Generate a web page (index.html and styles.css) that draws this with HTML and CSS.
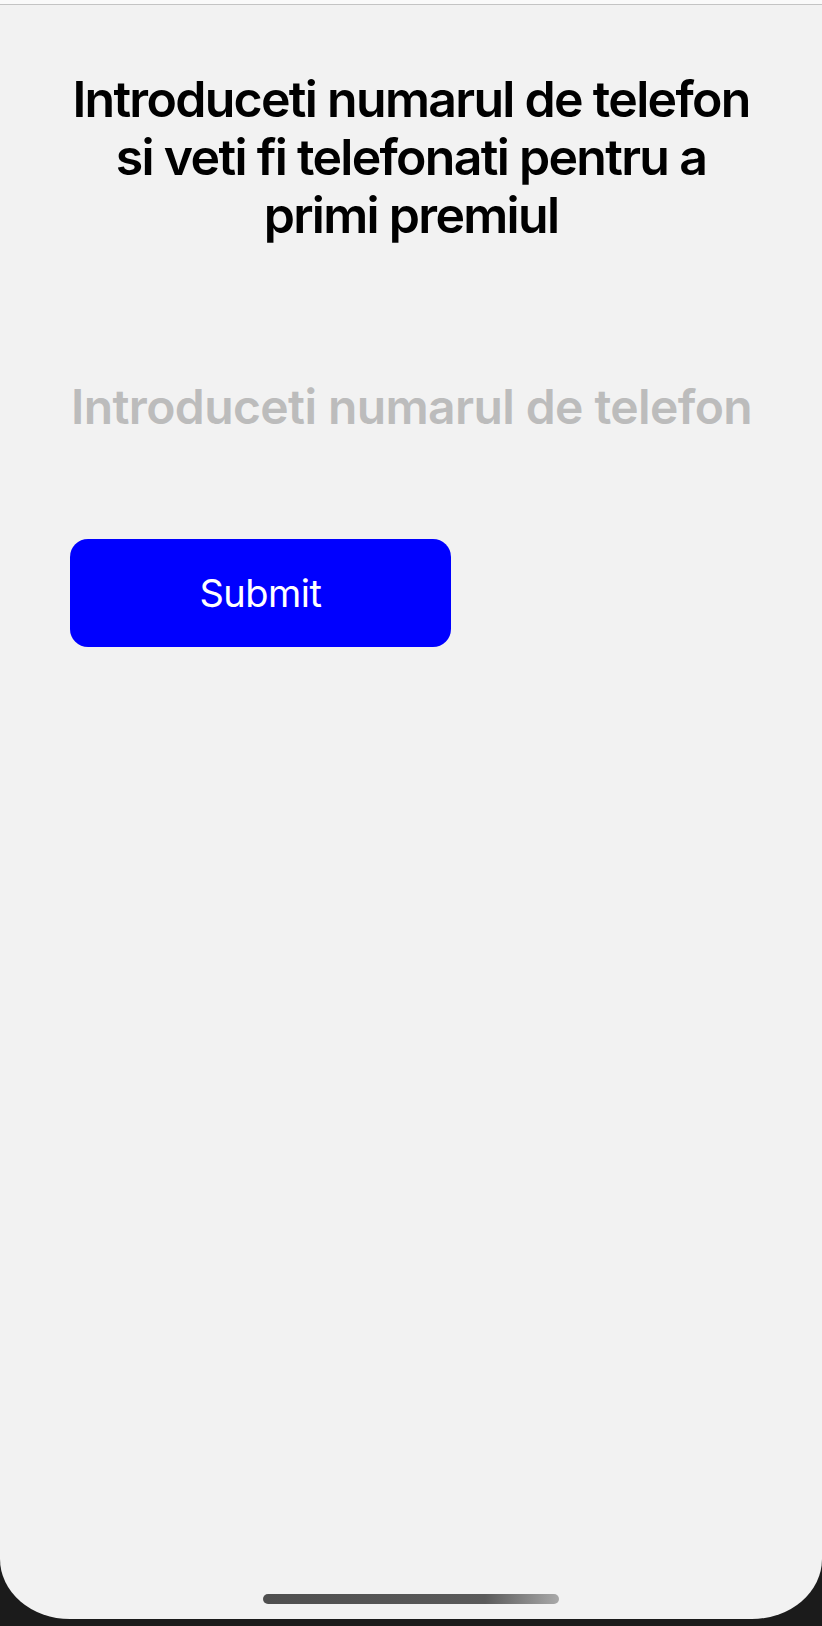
FILE: index.html
```html
<!DOCTYPE html>
<html lang="ro">
<head>
<meta charset="utf-8">
<title>Premiu</title>
<link rel="stylesheet" href="styles.css">
</head>
<body>
<div class="screen">
  <div class="topbar"></div>
  <main class="content">
    <h1 class="title">Introduceti numarul de telefon<br>si veti fi telefonati pentru a<br>primi premiul</h1>
    <input class="phone" type="tel" placeholder="Introduceti numarul de telefon">
    <button class="submit" type="button">Submit</button>
  </main>
  <div class="home-indicator"></div>
</div>
</body>
</html>
```
FILE: styles.css
```css
html, body {
  margin: 0;
  padding: 0;
}
body {
  background: #1b1b1b;
  width: 822px;
  height: 1626px;
  overflow: hidden;
  font-family: Inter, "Noto Sans", sans-serif;
}
.screen {
  height: 1619px;
  background: #f2f2f2;
  border-radius: 0 0 70px 70px / 0 0 60px 60px;
  display: flex;
  flex-direction: column;
}
.topbar {
  height: 4px;
  background: #fafafa;
  border-bottom: 1px solid #c4c4c4;
}
.content {
  flex: 1;
  display: flex;
  flex-direction: column;
  padding: 65px 70px 0;
}
.title {
  margin: 0 -20px;
  font-size: 50px;
  line-height: 58px;
  font-weight: 600;
  letter-spacing: -1.7px;
  text-align: center;
  white-space: nowrap;
  color: #000;
}
.phone {
  margin: 132px -20px 0 0;
  height: 60px;
  padding: 0 0 0 1px;
  border: none;
  background: transparent;
  outline: none;
  font-family: inherit;
  font-size: 48px;
  font-weight: 600;
  letter-spacing: -0.6px;
  color: #000;
}
.phone::placeholder {
  color: #bcbcbc;
  opacity: 1;
}
.submit {
  margin-top: 103px;
  width: 381px;
  height: 108px;
  border: none;
  border-radius: 18px;
  background: #0000ff;
  color: #fff;
  font-family: inherit;
  font-size: 38px;
  font-weight: 400;
  letter-spacing: -0.5px;
  padding: 0;
}
.home-indicator {
  align-self: center;
  width: 296px;
  height: 10px;
  border-radius: 5px;
  margin-bottom: 15px;
  background: linear-gradient(90deg, #4f4f4f 0%, #5a5a5a 75%, #a9a9a9 100%);
}
```
